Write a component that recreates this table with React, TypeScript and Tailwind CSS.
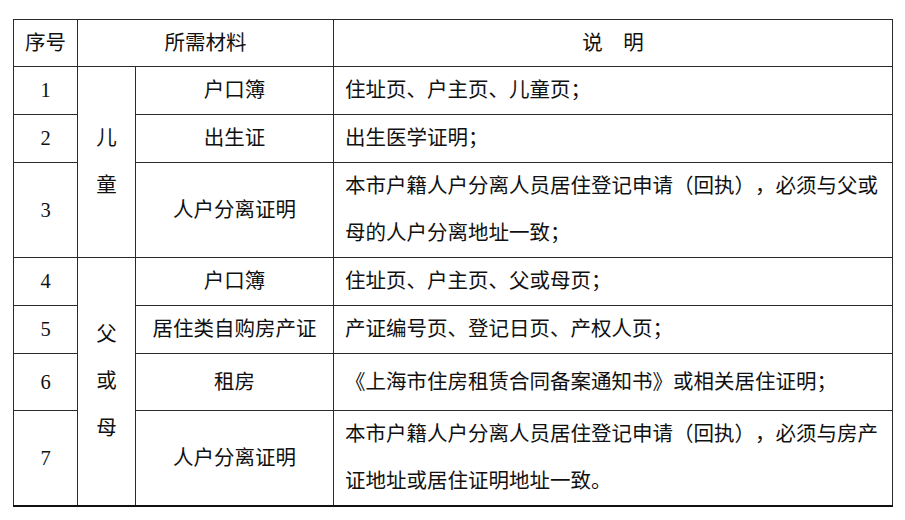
const rows = [
  { no: "1", name: "户口簿", desc: ["住址页、户主页、儿童页；"], h: "h-[48px]" },
  { no: "2", name: "出生证", desc: ["出生医学证明；"], h: "h-[48px]" },
  {
    no: "3",
    name: "人户分离证明",
    desc: ["本市户籍人户分离人员居住登记申请（回执），必须与父或", "母的人户分离地址一致；"],
    h: "h-[94px]",
  },
  { no: "4", name: "户口簿", desc: ["住址页、户主页、父或母页；"], h: "h-[48px]" },
  { no: "5", name: "居住类自购房产证", desc: ["产证编号页、登记日页、产权人页；"], h: "h-[48px]" },
  { no: "6", name: "租房", desc: ["《上海市住房租赁合同备案通知书》或相关居住证明；"], h: "h-[57px]" },
  {
    no: "7",
    name: "人户分离证明",
    desc: ["本市户籍人户分离人员居住登记申请（回执），必须与房产", "证地址或居住证明地址一致。"],
    h: "h-[94px]",
  },
];

const cell = "border border-[#2a2a2a] p-0 align-middle";

export default function App() {
  return (
    <div className="min-h-[520px] w-[905px] bg-white pl-[13px] pt-[19px] font-['Liberation_Serif','Noto_Sans_CJK_SC',serif] text-[20.5px] text-[#111] [text-spacing-trim:space-all]">
      <table className="w-[879px] table-fixed border-collapse border-b-2 border-b-[#111]">
        <colgroup>
          <col className="w-[64px]" />
          <col className="w-[58px]" />
          <col className="w-[198px]" />
          <col className="w-[559px]" />
        </colgroup>
        <thead>
          <tr className="h-[47px]">
            <th className={`${cell} text-center font-normal`}>序号</th>
            <th colSpan={2} className={`${cell} text-center font-normal`}>
              所需材料
            </th>
            <th className={`${cell} text-center font-normal`}>说　明</th>
          </tr>
        </thead>
        <tbody>
          {rows.map((r, i) => (
            <tr key={r.no} className={r.h}>
              <td className={`${cell} text-center`}>{r.no}</td>
              {i === 0 && (
                <td rowSpan={3} className={`${cell} text-center leading-[47px]`}>
                  儿<br />童
                </td>
              )}
              {i === 3 && (
                <td rowSpan={4} className={`${cell} text-center leading-[47px]`}>
                  父<br />或<br />母
                </td>
              )}
              <td className={`${cell} whitespace-nowrap text-center`}>{r.name}</td>
              <td className={`${cell} whitespace-nowrap px-[11px] leading-[47px]`}>
                {r.desc.map((line) => (
                  <div key={line}>{line}</div>
                ))}
              </td>
            </tr>
          ))}
        </tbody>
      </table>
    </div>
  );
}
